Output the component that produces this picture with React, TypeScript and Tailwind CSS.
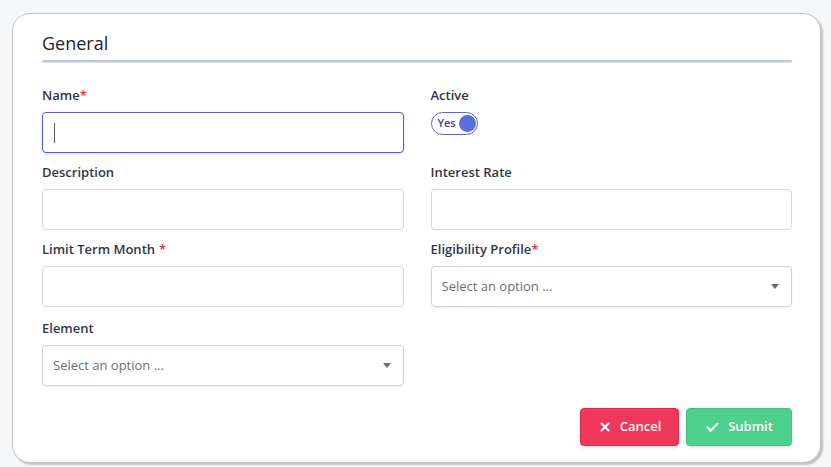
import { X, Check } from "lucide-react";

const FONT = { fontFamily: '"Open Sans", "Noto Sans", sans-serif' };

function Label({ text, required, spaced }: { text: string; required?: boolean; spaced?: boolean }) {
  return (
    <div className="mb-[8px] flex h-[18px] items-center text-[13px] font-semibold leading-[18px] text-[#2f3648]">
      {text}
      {required && <span className={spaced ? "ml-[4px] text-[#e3342f]" : "text-[#e3342f]"}>*</span>}
    </div>
  );
}

function TextBox({ focused }: { focused?: boolean }) {
  return (
    <div
      className={
        focused
          ? "flex h-[41px] items-center rounded-[4px] border border-[#5560c4] bg-white px-[11px] shadow-[0_1px_3px_rgba(85,96,196,0.25)]"
          : "h-[41px] rounded-[4px] border border-[#d3d6dc] bg-white"
      }
    >
      {focused && <div className="h-[20px] w-px bg-[#555]" />}
    </div>
  );
}

function SelectBox() {
  return (
    <div className="flex h-[41px] items-center justify-between rounded-[4px] border border-[#cfd2d8] bg-white pl-[10px] pr-[12px] shadow-[0_1px_2px_rgba(0,0,0,0.06)]">
      <span className="text-[13px] text-[#6b6f78]">Select an option ...</span>
      <span className="h-0 w-0 border-x-[4px] border-t-[5px] border-x-transparent border-t-[#6d6d6d]" />
    </div>
  );
}

export default function App() {
  return (
    <div className="h-[467px] w-[831px] bg-[#f6f7f9] pb-[4px] pl-[12px] pr-[10px] pt-[13px]" style={FONT}>
      <div className="flex h-[450px] flex-col rounded-[18px] border border-[#c4c4c4] bg-white pl-[29px] pr-[28px] pt-[18px] shadow-[2px_2px_2px_rgba(0,0,0,0.22)]">
        <div className="text-[18px] font-medium leading-[22px] text-[#1d2232]">General</div>
        <div className="mt-[6px] h-[3px] rounded-full border-b border-[#dbe1e8] bg-[#bfc9d5]" />

        <div className="mt-[23px] grid grid-cols-2 gap-x-[27px] gap-y-[10px]">
          <div>
            <Label text="Name" required />
            <TextBox focused />
          </div>
          <div>
            <Label text="Active" />
            <div className="flex h-[23px] w-[47px] items-center justify-between rounded-full border-[1.5px] border-[#5a66cf] bg-white pl-[6px] pr-[1px]">
              <span className="text-[11px] font-semibold text-[#3b478a]">Yes</span>
              <span className="h-[17px] w-[17px] rounded-full bg-[#5a6ee0]" />
            </div>
          </div>
          <div>
            <Label text="Description" />
            <TextBox />
          </div>
          <div>
            <Label text="Interest Rate" />
            <TextBox />
          </div>
          <div>
            <Label text="Limit Term Month" required spaced />
            <TextBox />
          </div>
          <div>
            <Label text="Eligibility Profile" required />
            <SelectBox />
          </div>
          <div className="mt-[2px]">
            <Label text="Element" />
            <SelectBox />
          </div>
        </div>

        <div className="mt-[22px] flex justify-end gap-[7px]">
          <button className="flex h-[38px] w-[99px] items-center justify-center gap-[8px] rounded-[4px] border border-[#d92a4c] bg-[#f2375c] text-[13px] font-semibold text-white shadow-[0_2px_3px_rgba(0,0,0,0.12)]">
            <X size={14} strokeWidth={3.5} />
            Cancel
          </button>
          <button className="flex h-[38px] w-[106px] items-center justify-center gap-[8px] rounded-[4px] border border-[#45c27f] bg-[#4cd08b] text-[13px] font-semibold text-white shadow-[0_2px_3px_rgba(0,0,0,0.12)]">
            <Check size={15} strokeWidth={3.5} />
            Submit
          </button>
        </div>
      </div>
    </div>
  );
}
